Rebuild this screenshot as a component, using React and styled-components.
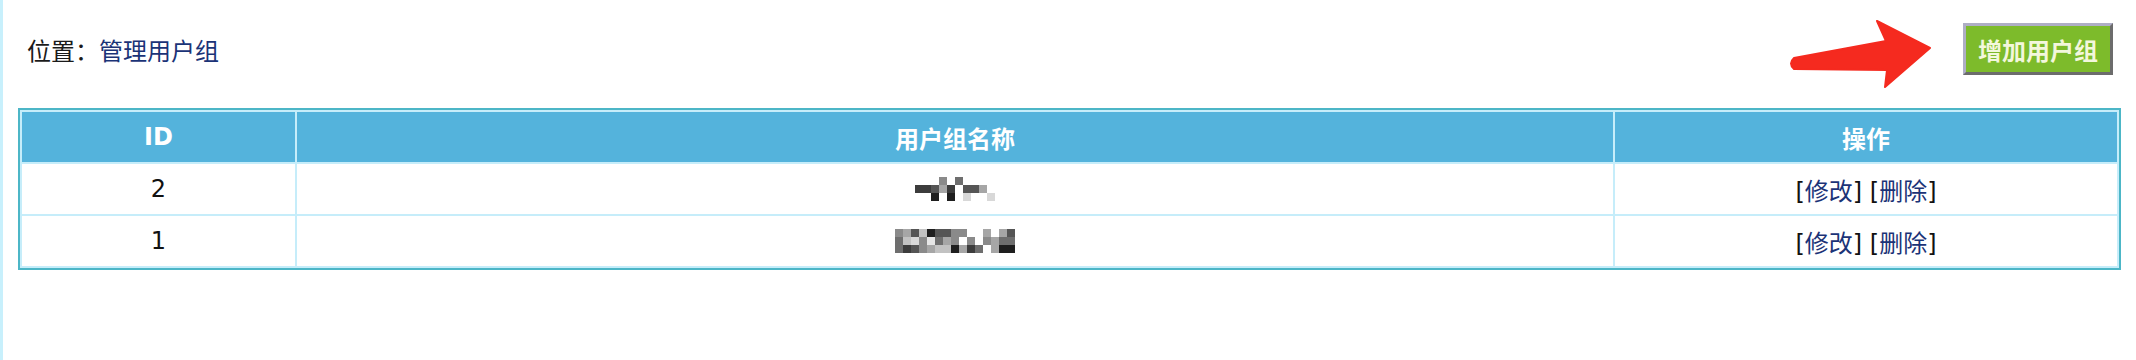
import React from 'react'
import styled, { createGlobalStyle } from 'styled-components'

const GlobalStyle = createGlobalStyle`
  body {
    margin: 0;
    background: #fff;
    font-family: "DejaVu Sans", "Noto Sans CJK SC", sans-serif;
  }
`

const groups = [
  { id: 2, mosaic: 'a' },
  { id: 1, mosaic: 'b' },
]

// pixelated (censored) group names, one shade per 8px block, '.' = empty
const mosaics = {
  a: {
    cols: 10,
    rows: ['...5.4....', '22362.336.', '..1.1.7..7'.replace(/7/g, '8')],
  },
  b: {
    cols: 15,
    rows: ['563713355..6.63', '47859465.5.5644', '42356771624.611'],
  },
}

const shade = {
  1: '#1e1e1e',
  2: '#3c3c3c',
  3: '#555',
  4: '#6e6e6e',
  5: '#8a8a8a',
  6: '#a6a6a6',
  7: '#c2c2c2',
  8: '#d8d8d8',
  9: '#e6e6e6',
}

const Page = styled.div`
  min-height: 360px;
  box-sizing: border-box;
  border-left: 3px solid #c8f0fc;
  padding: 23px 15px 0 15px;
`

const TopBar = styled.div`
  display: flex;
  justify-content: space-between;
  align-items: center;
  padding: 0 8px 0 9px;
  height: 52px;
  margin-bottom: 33px;
`

const Location = styled.div`
  font-family: "Noto Sans CJK SC", sans-serif;
  font-size: 24px;
  color: #1a1a1a;
  a {
    color: #1b3377;
    text-decoration: none;
  }
`

const Actions = styled.div`
  display: flex;
  align-items: flex-start;
  gap: 28px;
  height: 52px;
`

const Arrow = styled.svg`
  margin-top: -8px;
  flex: none;
`

const AddButton = styled.button`
  width: 150px;
  height: 52px;
  box-sizing: border-box;
  background: #7dbb2b;
  border: 3px solid;
  border-color: #aeaec4 #6c6c6c #6c6c6c #aeaec4;
  color: #f3f7dc;
  font-family: "Noto Sans CJK SC", sans-serif;
  font-weight: 700;
  font-size: 24px;
  padding: 0;
  cursor: pointer;
`

const Table = styled.table`
  width: 100%;
  border: 2px solid #4cb6c7;
  border-spacing: 2px;
  background: #c6edfa;
  font-size: 24px;
`

const Th = styled.th`
  height: 50px;
  padding: 0;
  background: #54b3dc;
  color: #fff;
  font-weight: 700;
  font-family: ${(p) => (p.latin ? '"DejaVu Sans"' : '"Noto Sans CJK SC"')}, sans-serif;
  width: ${(p) => p.w || 'auto'};
`

const Td = styled.td`
  height: 50px;
  padding: 0;
  background: #fff;
  text-align: center;
  color: #111;
  a {
    color: #1b3377;
    text-decoration: none;
    font-family: "Noto Sans CJK SC", sans-serif;
  }
`

const Mosaic = styled.svg`
  display: block;
  margin: 0 auto;
`

const NameMosaic = ({ kind }) => {
  const m = mosaics[kind]
  const size = 8
  return (
    <Mosaic width={m.cols * size} height={m.rows.length * size}>
      {m.rows.map((row, r) =>
        row.split('').map((c, i) =>
          c === '.' ? null : (
            <rect key={`${r}-${i}`} x={i * size} y={r * size} width={size} height={size} fill={shade[c]} />
          )
        )
      )}
    </Mosaic>
  )
}

const App = () => {
  return (
    <Page>
      <GlobalStyle />
      <TopBar>
        <Location>
          位置：<a href="#">管理用户组</a>
        </Location>
        <Actions>
          <Arrow width="155" height="80" viewBox="0 0 155 80">
            <path
              d="M14 43 L106 26 L97 6 L150 33 L105 72 L107 55 L14 54 Q8 48.5 14 43 Z"
              fill="#f52a1f"
              stroke="#f52a1f"
              strokeWidth="2"
              strokeLinejoin="round"
            />
          </Arrow>
          <AddButton>增加用户组</AddButton>
        </Actions>
      </TopBar>
      <Table>
        <thead>
          <tr>
            <Th latin w="273px">ID</Th>
            <Th>用户组名称</Th>
            <Th w="502px">操作</Th>
          </tr>
        </thead>
        <tbody>
          {groups.map((g) => (
            <tr key={g.id}>
              <Td>{g.id}</Td>
              <Td>
                <NameMosaic kind={g.mosaic} />
              </Td>
              <Td>
                [<a href="#">修改</a>] [<a href="#">删除</a>]
              </Td>
            </tr>
          ))}
        </tbody>
      </Table>
    </Page>
  )
}

export default App
